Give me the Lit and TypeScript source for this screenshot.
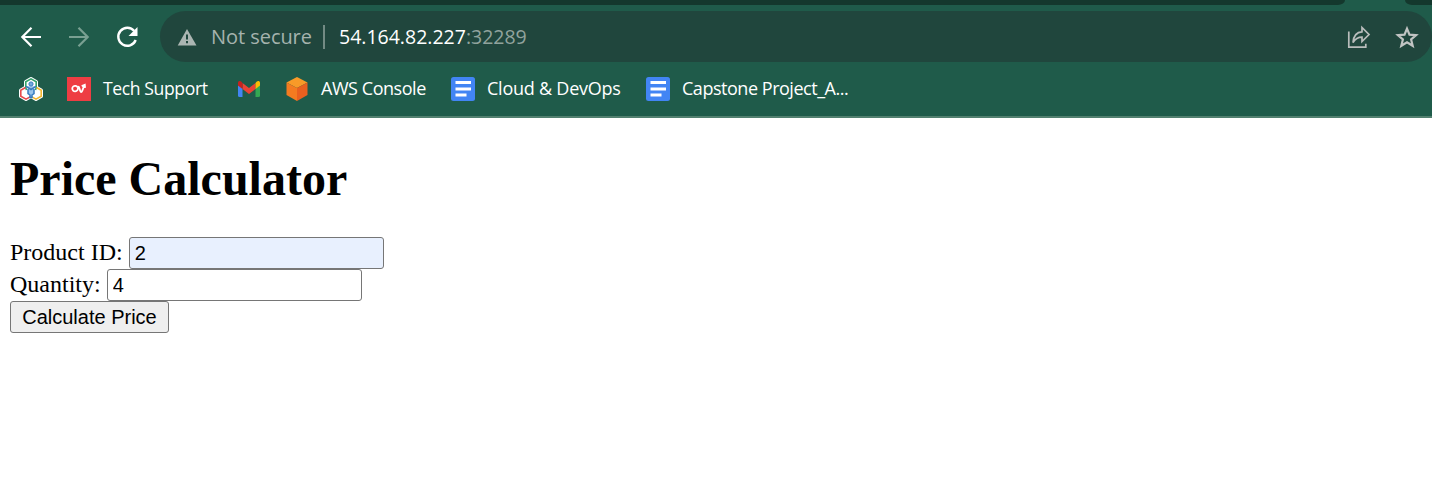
import { LitElement, html, css } from "lit";
import { customElement } from "lit/decorators.js";

const docsIcon = html`<svg width="24" height="24" viewBox="0 0 24 24">
  <rect width="24" height="24" rx="2.5" fill="#4285f4" />
  <path d="M4.500 5.500h15.500M4.500 12h15.500M4.500 18h11" stroke="#fff" stroke-width="2.800" />
</svg>`;

const hexagon = (x: number, y: number) =>
  `M${x} ${y - 6}l5.2 3v6l-5.200 3l-5.200-3v-6z`;

@customElement("browser-toolbar")
class BrowserToolbar extends LitElement {
  static styles = css`
    :host { display: block; height: 118px; box-sizing: border-box; background: #1f5b4a; border-bottom: 2px solid #52806f; font-family: "Open Sans", "Noto Sans", sans-serif; color: #fff; }
    svg { display: block; flex: none; }
    .tabs { display: flex; justify-content: space-between; height: 5px; }
    .tab { background: #14382d; height: 5px; }
    .left { width: 1345px; border-bottom-right-radius: 7px 5px; }
    .right { width: 27px; border-bottom-left-radius: 7px 5px; }
    .nav { display: flex; height: 51px; margin-top: 6px; }
    .buttons { display: flex; align-items: center; gap: 24px; width: 160px; box-sizing: border-box; padding-left: 19px; }
    .address { flex: 1; display: flex; align-items: center; background: #20463d; border-radius: 26px; padding: 0 13px 0 17px; font-size: 19.5px; white-space: nowrap; }
    .insecure { color: #a5b3ae; margin-left: 14px; width: 112px; font-size: 20px; letter-spacing: -0.05px; }
    .divider { width: 2px; height: 24px; background: #738b84; margin-right: 14px; }
    .url { flex: 1; letter-spacing: 0; }
    .port { color: #91a39d; }
    .actions { display: flex; gap: 24px; }
    .bookmarks { display: flex; align-items: center; height: 54px; padding-left: 19px; font-size: 18px; white-space: nowrap; }
    .mark { display: flex; align-items: center; gap: 12px; }
    .mark span { padding-bottom: 2px; }
    .m1 { width: 48px; }
    .m2 { width: 168px; }
    .m3 { width: 50px; }
    .m4 { width: 166px; }
    .m5 { width: 195px; }
    .t2 { font-size: 17.6px; letter-spacing: -0.4px; }
    .t4 { letter-spacing: -0.45px; }
    .t5 { letter-spacing: -0.24px; }
    .t6 { letter-spacing: -0.47px; }
  `;

  render() {
    return html`
      <div class="tabs"><div class="tab left"></div><div class="tab right"></div></div>
      <div class="nav">
        <div class="buttons">
          <svg width="24" height="24" viewBox="0 0 24 24" fill="none" stroke="#fff" stroke-width="2.2"><path d="M22 12H3.5M12.500 2.800L3.300 12l9.200 9.200" /></svg>
          <svg width="24" height="24" viewBox="0 0 24 24" fill="none" stroke="#79a092" stroke-width="2.2"><path d="M2 12h18.500M11.500 2.800L20.700 12l-9.200 9.200" /></svg>
          <svg width="24" height="24" viewBox="0 0 24 24"><path d="M19.300 6.100A9 9 0 1 0 20.700 15" fill="none" stroke="#fff" stroke-width="2.400" /><path d="M22.500 2v9h-9z" fill="#fff" /></svg>
        </div>
        <div class="address">
          <svg width="20" height="20" viewBox="0 0 20 20"><path d="M10 2l9.500 16.500H.7z" fill="#abb5b2" /><path d="M10 7.500v5M10 14v2.200" stroke="#20463d" stroke-width="2" /></svg>
          <span class="insecure">Not secure</span>
          <span class="divider"></span>
          <span class="url">54.164.82.227<span class="port">:32289</span></span>
          <div class="actions">
            <svg width="24" height="24" viewBox="0 0 24 24" fill="none" stroke="#b9bdbc" stroke-width="1.700"><path d="M1.800 6.500v15.700h17v-3.500" /><path d="M6 17.500C6.600 10 10 7 15 6.800V2.500l7 7-7 7v-4.300c-4 0-6.800 1.700-9 5.300z" /></svg>
            <svg width="24" height="24" viewBox="0 0 24 24"><path d="M12 3.600l2.500 6 6.600.5-5 4.300 1.600 6.400-5.700-3.500-5.700 3.500 1.600-6.400-5-4.300 6.600-.5z" fill="none" stroke="#c1c4c3" stroke-width="2.200" /></svg>
          </div>
        </div>
      </div>
      <div class="bookmarks">
        <div class="mark m1">
          <svg width="24" height="24" viewBox="0 0 24 24">
            <g fill="#fff" stroke="#fff" stroke-width="3.600" stroke-linejoin="round"><path d=${hexagon(12, 7.8)} /><path d=${hexagon(7, 16.2)} /><path d=${hexagon(17, 16.2)} /></g>
            <g fill="none" stroke-width="1.600"><path d="M7.500 13L6.800 10.800V4.800L12 1.800l5.200 3v6L16.500 13" stroke="#34a36b" /><path d="M6.500 10.500L1.800 13.200v6L7 22.200l4.500-2.600" stroke="#e84b4e" /><path d="M17.500 10.500l4.700 2.700v6L17 22.200l-4.500-2.600" stroke="#f3b62f" /></g>
            <path d="M7 9.300l5 3.200 5-3.200M9 12v4.500l2 1.500v2.500h2V18l2-1.500V12" fill="#9bc4ea" stroke="#377bc0" stroke-width="1.500" /><circle cx="12" cy="7" r="2.100" fill="#74a9dc" stroke="#377bc0" />
          </svg>
        </div>
        <div class="mark m2">
          <svg width="24" height="24" viewBox="0 0 24 24"><rect width="24" height="24" fill="#ee3d43" /><path d="M10.500 10.200a2.800 2.800 0 1 0-.2 3.100c1-1.200.4-3.700 1.300-3.700.9 0 1.300 5.500 2.500 5.500 1.200 0 2.100-5.100 3.700-7.200M14.700 9.200l3.100-1.300.3 3" fill="none" stroke="#fff" stroke-width="1.800" /></svg>
          <span class="t2">Tech Support</span>
        </div>
        <div class="mark m3">
          <svg width="26" height="24" viewBox="0 0 26 24">
            <path d="M3 8l4.500 3v9H4.500Q3 20 3 18.500z" fill="#4285f4" /><path d="M25 8l-4.500 3v9h3q1.500 0 1.500-1.500z" fill="#34a853" />
            <path d="M7.500 6l6.500 5 6.500-5v6L14 17l-6.500-5z" fill="#ea4335" /><path d="M3 8V6c0-2 2-2.500 3.200-1.400L7.500 6v6L3 8.600z" fill="#c5221f" /><path d="M25 8V6c0-2-2-2.500-3.200-1.400L20.500 6v6L25 8.600z" fill="#fbbc04" />
          </svg>
        </div>
        <div class="mark m4">
          <svg width="24" height="24" viewBox="0 0 24 24"><path d="M12 0l10.500 5.500L12 11 1.500 5.500z" fill="#f89a28" /><path d="M1.500 5.500L12 11v13L1.500 18z" fill="#f47b20" /><path d="M22.500 5.500L12 11v13l10.500-6z" fill="#e9601f" /></svg>
          <span class="t4">AWS Console</span>
        </div>
        <div class="mark m5">${docsIcon}<span class="t5">Cloud &amp; DevOps</span></div>
        <div class="mark">${docsIcon}<span class="t6">Capstone Project_A...</span></div>
      </div>
    `;
  }
}

@customElement("price-form")
class PriceForm extends LitElement {
  static styles = css`
    :host { display: block; padding: 33px 10px 0; font-family: "Liberation Serif", serif; font-size: 24px; color: #000; }
    h1 { margin: 0 0 31px; font-size: 48px; line-height: 55px; font-weight: bold; }
    .row { display: flex; align-items: center; gap: 6px; height: 32px; }
    label { padding-bottom: 2px; }
    input, button { box-sizing: border-box; height: 32px; margin: 0; border: 1px solid #767676; border-radius: 3px; font: 20px "Liberation Sans", sans-serif; color: #000; }
    input { width: 255px; padding: 1px 5px; background: #fff; outline: none; }
    .filled { background: #e8f0fe; }
    button { display: block; width: 159px; padding: 0; background: #efefef; white-space: nowrap; }
  `;

  render() {
    return html`
      <h1>Price Calculator</h1>
      <div class="row"><label for="product">Product ID:</label><input id="product" class="filled" value="2" /></div>
      <div class="row"><label for="quantity">Quantity:</label><input id="quantity" value="4" /></div>
      <button type="button">Calculate Price</button>
    `;
  }
}

@customElement("app-root")
class AppRoot extends LitElement {
  static styles = css`:host { display: block; height: 481px; overflow: hidden; background: #fff; }`;

  render() {
    return html`<browser-toolbar></browser-toolbar><price-form></price-form>`;
  }
}
